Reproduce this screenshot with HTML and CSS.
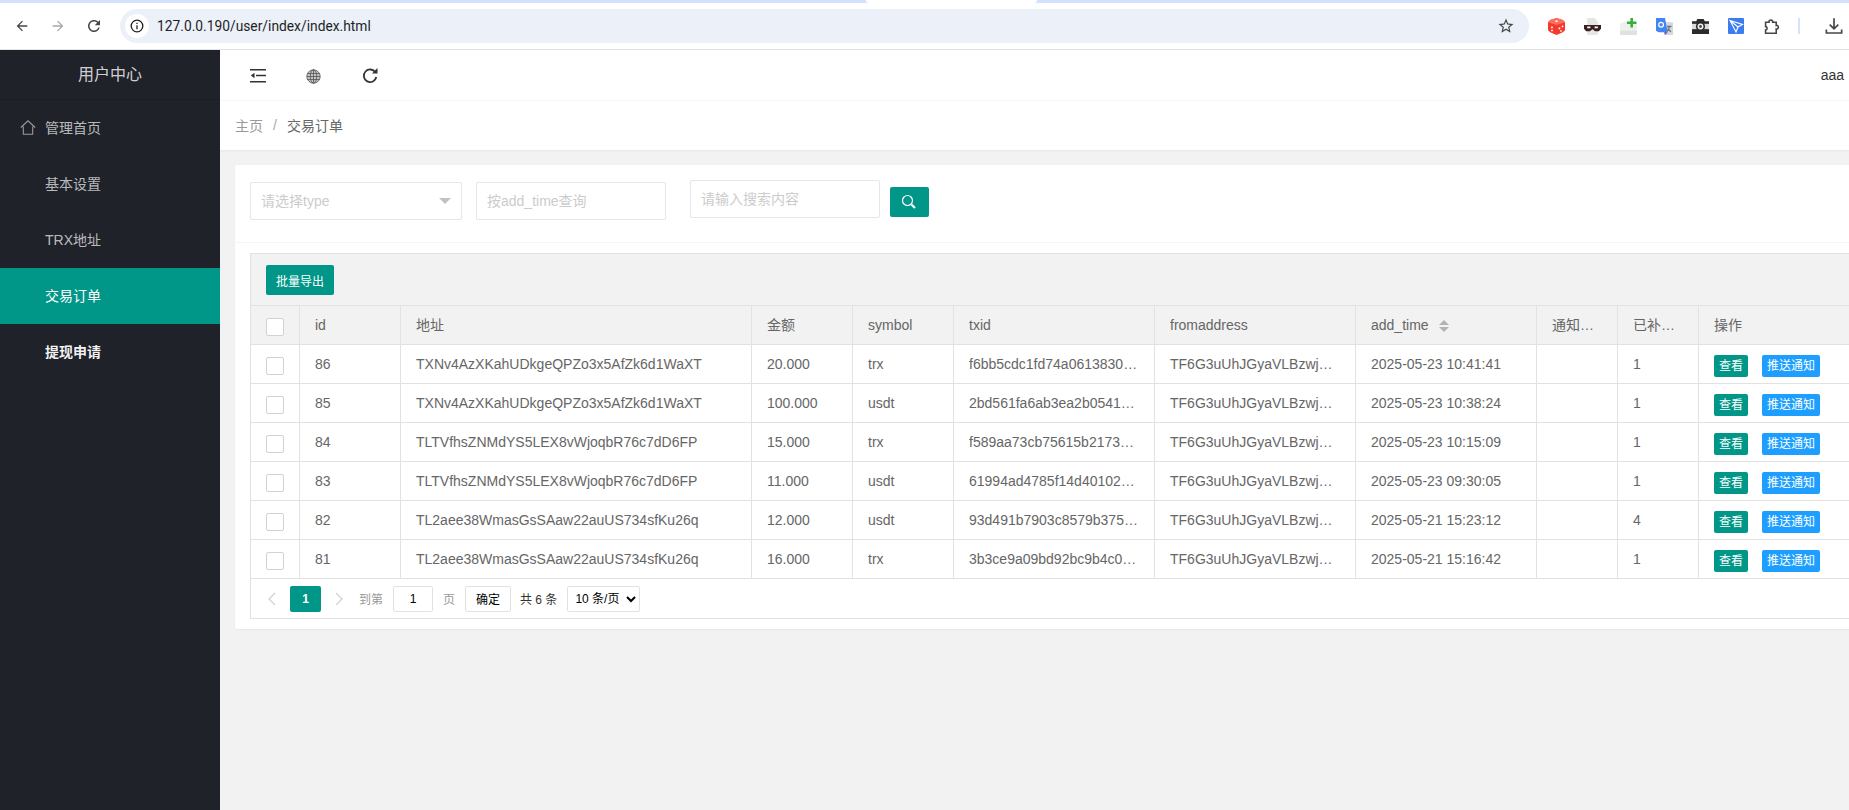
FILE: index.html
```html
<!DOCTYPE html>
<html lang="zh-CN">
<head>
    <meta charset="UTF-8">
    <title>交易订单</title>
    <link rel="stylesheet" href="styles.css">
</head>
<body>
    <div class="chrome">
        <div class="tabstrip"><div class="tabstrip-active"></div></div>
        <div class="toolbar">
            <span class="tool"><svg width="16" height="16" viewBox="0 0 24 24" fill="#474747"><path d="M20 11H7.830l5.590-5.590L12 4l-8 8 8 8 1.410-1.410L7.830 13H20v-2z"/></svg></span>
            <span class="tool"><svg width="16" height="16" viewBox="0 0 24 24" fill="#a8a8a8"><path d="M4 11h12.170l-5.590-5.590L12 4l8 8-8 8-1.410-1.410L16.170 13H4v-2z"/></svg></span>
            <span class="tool"><svg width="18" height="18" viewBox="0 0 24 24" fill="#474747"><path d="M17.650 6.350C16.200 4.900 14.210 4 12 4c-4.420 0-7.990 3.580-7.990 8s3.570 8 7.990 8c3.730 0 6.840-2.550 7.730-6h-2.080c-.82 2.330-3.040 4-5.650 4-3.310 0-6-2.690-6-6s2.690-6 6-6c1.660 0 3.140.69 4.220 1.780L13 11h7V4l-2.350 2.350z"/></svg></span>
            <div class="omnibox">
                <span class="site-info"><svg width="14" height="14" viewBox="0 0 14 14" fill="none" stroke="#1f1f1f" stroke-width="1.300"><circle cx="7" cy="7" r="5.800"/><path d="M7 6.200v4M7 3.700v1.300"/></svg></span>
                <span class="url">127.0.0.190/user/index/index.html</span>
                <svg class="star" width="18" height="18" viewBox="0 0 24 24" fill="#474747"><path d="M22 9.240l-7.190-.62L12 2 9.190 8.630 2 9.240l5.460 4.730L5.820 21 12 17.270 18.180 21l-1.630-7.030L22 9.240zM12 15.400l-3.760 2.270 1-4.280-3.320-2.880 4.380-.38L12 6.100l1.710 4.040 4.380.38-3.320 2.880 1 4.280L12 15.400z"/></svg>
            </div>
            <div class="extensions">
                <span class="tool"><svg width="17" height="17" viewBox="0 0 16 16"><path fill="#f4392d" d="M8 0l6 1.800 2 2.200v7.500l-2 2L8 16l-6-2.500-2-2V4l2-2.200z"/><path fill="#fb6f61" d="M8 0l6 1.800 2 2.200-8 2.500L0 4l2-2.200z"/><path fill="#fff" d="M7 2.400h2v1.300H7zM3 8h1.500v1.700H3zM3 11h1.500v1.500H3zM10 9h1.500v1.700H10zM13 7h1.300v1.600H13zM11.500 11.500h1.400v1.400h-1.400z"/></svg></span>
                <span class="tool"><svg width="17" height="17" viewBox="0 0 16 16"><path fill="#e6e6e6" d="M3 0h7l3 3.500V16H3z"/><path fill="#3c1f1f" d="M0 6.500h16v3.500l-2 2.500h-3.500L8 10.500 5.500 12.500H2L0 10z"/><path fill="#fff" d="M3 8h3v1.600H3zM10 8h3v1.600h-3z"/></svg></span>
                <span class="tool"><svg width="17" height="17" viewBox="0 0 16 16"><path fill="#eef0ee" d="M0 5l6-2v2h10v11H0z"/><path fill="#dfe2df" d="M0 12h16v4H0z"/><path fill="#38ad38" d="M9.800 0h2.400v3.300h3.300v2.400h-3.300V9H9.800V5.700H6.500V3.300h3.300z"/></svg></span>
                <span class="tool"><svg width="17" height="17" viewBox="0 0 16 16"><path fill="#d5d7da" d="M7 4h9v12H9z"/><path fill="#4285f4" d="M0 0h8.500l2.500 13.500H2.500L0 12z"/><path fill="#5a4ec0" d="M7.500 13.500h3.500L8.500 16z"/><circle cx="4.800" cy="6.300" r="2.200" fill="none" stroke="#fff" stroke-width="1.200"/><path fill="none" stroke="#6b7177" stroke-width="1.200" d="M10.500 8h4M12.500 8c0 2-1 3.500-2 4.500M11 10l3 3"/></svg></span>
                <span class="tool"><svg width="17" height="15" viewBox="0 0 16 14"><path fill="#2b2b2b" d="M0 2h4l1-2h6l1 2h4v12H0z"/><path fill="#dcdcdc" d="M0 4.500h16v5H0z"/><circle cx="8" cy="7" r="4.300" fill="#2b2b2b"/><circle cx="8" cy="7" r="2.800" fill="#f0f0f0"/><circle cx="8" cy="7" r="1.300" fill="#444"/></svg></span>
                <span class="tool"><svg width="16" height="16" viewBox="0 0 16 16"><rect width="16" height="16" rx="1" fill="#3d7cf0"/><path fill="none" stroke="#fff" stroke-width="1.100" d="M2 2.500l12.500 4-4.500 2.500-2 5zM2 2.500L10 9"/></svg></span>
                <span class="tool"><svg width="17" height="17" viewBox="0 0 16 16" fill="none" stroke="#474747" stroke-width="1.500"><path d="M1.500 4h3.200c-.6-2.800 4.100-2.800 3.500 0h3.300v3c2.600-.6 2.600 3.900 0 3.300v4H1.500v-3c1.800.3 1.800-3.500 0-3.200z"/></svg></span>
            </div>
            <span class="toolbar-sep"></span>
            <span class="tool tool-download"><svg width="18" height="18" viewBox="0 0 16 16" fill="none" stroke="#474747" stroke-width="1.500"><path d="M8 1v9M4.200 6.800L8 10.500l3.800-3.700M1.200 11v3.200h13.600V11"/></svg></span>
        </div>
    </div>

    <div class="app">
        <aside class="sidebar">
            <div class="logo">用户中心</div>
            <ul class="nav">
                <li class="nav-item">
                    <svg class="nav-icon" width="16" height="15" viewBox="0 0 16 15" fill="none" stroke="#9a9a9a" stroke-width="1.100"><path d="M.8 7.500L8 .8l7.200 6.700M3.300 6.500v7.800h9.400V6.500"/></svg>
                    管理首页
                </li>
                <li class="nav-item">基本设置</li>
                <li class="nav-item">TRX地址</li>
                <li class="nav-item active">交易订单</li>
                <li class="nav-item strong">提现申请</li>
            </ul>
        </aside>

        <main class="main">
            <header class="topbar">
                <span class="top-icon"><svg width="16" height="14" viewBox="0 0 16 14" fill="#333"><path d="M0 0h16v1.500H0zM6 5.800h10v1.500H6zM0 12h16v1.500H0zM4.500 3.800v5.500L.8 6.500z"/></svg></span>
                <span class="top-icon"><svg width="15" height="15" viewBox="0 0 15 15" fill="none" stroke="#555" stroke-width=".8"><circle cx="7.500" cy="7.500" r="6.700" fill="#c4c4c4"/><ellipse cx="7.500" cy="7.500" rx="3.200" ry="6.700"/><path d="M7.500 .8v13.400M1.300 4.500h12.400M.8 7.500h13.400M1.300 10.500h12.400"/></svg></span>
                <span class="top-icon"><svg width="16" height="16" viewBox="0 0 16 16" fill="none" stroke="#333" stroke-width="1.800"><path d="M13.500 4.500A6.300 6.300 0 1 0 14.300 9"/><path fill="#333" stroke="none" d="M10 5.500h5.500V0z"/></svg></span>
                <span class="top-user">aaa</span>
            </header>
            <div class="breadcrumb">
                <span class="crumb-home">主页</span>
                <span class="crumb-sep">/</span>
                <span class="crumb-current">交易订单</span>
            </div>

            <div class="content">
                <section class="card">
                    <form class="filters">
                        <div class="fake-select">
                            <span>请选择type</span>
                            <i class="caret"></i>
                        </div>
                        <input class="field field-time" placeholder="按add_time查询">
                        <input class="field field-search" placeholder="请输入搜索内容">
                        <button class="search-btn" type="button">
                            <svg width="16" height="16" viewBox="0 0 16 16" fill="none" stroke="#fff" stroke-width="1.200"><circle cx="6.500" cy="6.500" r="5"/><path stroke-width="2.200" d="M10.500 10.500l3.500 3.500"/></svg>
                        </button>
                    </form>

                    <div class="table-box">
                        <div class="table-tools">
                            <button class="btn" type="button">批量导出</button>
                        </div>
                        <table class="table">
                            <colgroup>
                                <col class="c-check"><col class="c-id"><col class="c-addr"><col class="c-amount"><col class="c-symbol"><col class="c-txid"><col class="c-from"><col class="c-time"><col class="c-short"><col class="c-short"><col class="c-ops">
                            </colgroup>
                            <thead>
                                <tr>
                                    <th><i class="check"></i></th>
                                    <th><div class="cell">id</div></th>
                                    <th><div class="cell">地址</div></th>
                                    <th><div class="cell">金额</div></th>
                                    <th><div class="cell">symbol</div></th>
                                    <th><div class="cell">txid</div></th>
                                    <th><div class="cell">fromaddress</div></th>
                                    <th><div class="cell">add_time<span class="sort"><i class="sort-up"></i><i class="sort-down"></i></span></div></th>
                                    <th><div class="cell">通知…</div></th>
                                    <th><div class="cell">已补…</div></th>
                                    <th class="no-border"><div class="cell">操作</div></th>
                                </tr>
                            </thead>
                            <tbody>
                                <tr>
                                    <td><i class="check"></i></td>
                                    <td><div class="cell">86</div></td>
                                    <td><div class="cell">TXNv4AzXKahUDkgeQPZo3x5AfZk6d1WaXT</div></td>
                                    <td><div class="cell">20.000</div></td>
                                    <td><div class="cell">trx</div></td>
                                    <td><div class="cell">f6bb5cdc1fd74a0613830…</div></td>
                                    <td><div class="cell">TF6G3uUhJGyaVLBzwj…</div></td>
                                    <td><div class="cell">2025-05-23 10:41:41</div></td>
                                    <td><div class="cell"></div></td>
                                    <td><div class="cell">1</div></td>
                                    <td class="no-border"><div class="cell ops"><a class="op op-view">查看</a><a class="op op-push">推送通知</a></div></td>
                                </tr>
                                <tr>
                                    <td><i class="check"></i></td>
                                    <td><div class="cell">85</div></td>
                                    <td><div class="cell">TXNv4AzXKahUDkgeQPZo3x5AfZk6d1WaXT</div></td>
                                    <td><div class="cell">100.000</div></td>
                                    <td><div class="cell">usdt</div></td>
                                    <td><div class="cell">2bd561fa6ab3ea2b0541…</div></td>
                                    <td><div class="cell">TF6G3uUhJGyaVLBzwj…</div></td>
                                    <td><div class="cell">2025-05-23 10:38:24</div></td>
                                    <td><div class="cell"></div></td>
                                    <td><div class="cell">1</div></td>
                                    <td class="no-border"><div class="cell ops"><a class="op op-view">查看</a><a class="op op-push">推送通知</a></div></td>
                                </tr>
                                <tr>
                                    <td><i class="check"></i></td>
                                    <td><div class="cell">84</div></td>
                                    <td><div class="cell">TLTVfhsZNMdYS5LEX8vWjoqbR76c7dD6FP</div></td>
                                    <td><div class="cell">15.000</div></td>
                                    <td><div class="cell">trx</div></td>
                                    <td><div class="cell">f589aa73cb75615b2173…</div></td>
                                    <td><div class="cell">TF6G3uUhJGyaVLBzwj…</div></td>
                                    <td><div class="cell">2025-05-23 10:15:09</div></td>
                                    <td><div class="cell"></div></td>
                                    <td><div class="cell">1</div></td>
                                    <td class="no-border"><div class="cell ops"><a class="op op-view">查看</a><a class="op op-push">推送通知</a></div></td>
                                </tr>
                                <tr>
                                    <td><i class="check"></i></td>
                                    <td><div class="cell">83</div></td>
                                    <td><div class="cell">TLTVfhsZNMdYS5LEX8vWjoqbR76c7dD6FP</div></td>
                                    <td><div class="cell">11.000</div></td>
                                    <td><div class="cell">usdt</div></td>
                                    <td><div class="cell">61994ad4785f14d40102…</div></td>
                                    <td><div class="cell">TF6G3uUhJGyaVLBzwj…</div></td>
                                    <td><div class="cell">2025-05-23 09:30:05</div></td>
                                    <td><div class="cell"></div></td>
                                    <td><div class="cell">1</div></td>
                                    <td class="no-border"><div class="cell ops"><a class="op op-view">查看</a><a class="op op-push">推送通知</a></div></td>
                                </tr>
                                <tr>
                                    <td><i class="check"></i></td>
                                    <td><div class="cell">82</div></td>
                                    <td><div class="cell">TL2aee38WmasGsSAaw22auUS734sfKu26q</div></td>
                                    <td><div class="cell">12.000</div></td>
                                    <td><div class="cell">usdt</div></td>
                                    <td><div class="cell">93d491b7903c8579b375…</div></td>
                                    <td><div class="cell">TF6G3uUhJGyaVLBzwj…</div></td>
                                    <td><div class="cell">2025-05-21 15:23:12</div></td>
                                    <td><div class="cell"></div></td>
                                    <td><div class="cell">4</div></td>
                                    <td class="no-border"><div class="cell ops"><a class="op op-view">查看</a><a class="op op-push">推送通知</a></div></td>
                                </tr>
                                <tr>
                                    <td><i class="check"></i></td>
                                    <td><div class="cell">81</div></td>
                                    <td><div class="cell">TL2aee38WmasGsSAaw22auUS734sfKu26q</div></td>
                                    <td><div class="cell">16.000</div></td>
                                    <td><div class="cell">trx</div></td>
                                    <td><div class="cell">3b3ce9a09bd92bc9b4c0…</div></td>
                                    <td><div class="cell">TF6G3uUhJGyaVLBzwj…</div></td>
                                    <td><div class="cell">2025-05-21 15:16:42</div></td>
                                    <td><div class="cell"></div></td>
                                    <td><div class="cell">1</div></td>
                                    <td class="no-border"><div class="cell ops"><a class="op op-view">查看</a><a class="op op-push">推送通知</a></div></td>
                                </tr>
                            </tbody>
                        </table>
                        <div class="pager">
                            <svg class="pager-arrow" width="9" height="14" viewBox="0 0 9 14" fill="none" stroke="#d2d2d2" stroke-width="1.300"><path d="M8 1L2 7l6 6"/></svg>
                            <span class="page-current">1</span>
                            <svg class="pager-arrow pager-next" width="9" height="14" viewBox="0 0 9 14" fill="none" stroke="#d2d2d2" stroke-width="1.300"><path d="M1 1l6 6-6 6"/></svg>
                            <span class="pager-label">到第</span>
                            <input class="page-input" value="1">
                            <span class="pager-label">页</span>
                            <button class="page-ok" type="button">确定</button>
                            <span class="page-total">共 6 条</span>
                            <select class="page-size"><option>10 条/页</option><option>20 条/页</option></select>
                        </div>
                    </div>
                </section>
            </div>
        </main>
    </div>
</body>
</html>
```

FILE: styles.css
```css
* {
    box-sizing: border-box;
}
html, body {
    height: 100%;
}
body {
    margin: 0;
    overflow: hidden;
    display: flex;
    flex-direction: column;
    font-family: "Liberation Sans", "Noto Sans CJK SC", sans-serif;
    font-size: 14px;
    color: #666;
    background: #f2f2f2;
}

/* browser bar */
.chrome {
    flex: none;
    height: 50px;
    background: #fff;
    border-bottom: 1px solid #e1e3e6;
}
.tabstrip {
    height: 3px;
    padding-left: 866px;
    background: #d3e3fd;
}
.tabstrip-active {
    width: 171px;
    height: 3px;
    background: #fff;
    border-radius: 0 0 4px 4px;
}
.toolbar {
    display: flex;
    align-items: flex-start;
    height: 46px;
    padding: 6px 0 0 4px;
}
.tool {
    width: 36px;
    height: 34px;
    flex: none;
    display: flex;
    align-items: center;
    justify-content: center;
}
.omnibox {
    flex: none;
    width: 1409px;
    height: 34px;
    margin-left: 8px;
    padding: 0 14px 0 5px;
    display: flex;
    align-items: center;
    background: #ebf0f9;
    border-radius: 17px;
}
.site-info {
    width: 24px;
    height: 24px;
    border-radius: 50%;
    background: #fff;
    display: flex;
    align-items: center;
    justify-content: center;
}
.url {
    margin-left: 8px;
    font-family: Roboto, sans-serif;
    font-size: 13.8px;
    color: #1f1f1f;
}
.star {
    margin-left: auto;
}
.extensions {
    display: flex;
    margin-left: 9px;
}
.toolbar-sep {
    flex: none;
    width: 2px;
    height: 16px;
    margin: 9px 0 0 8px;
    background: #d3e3fd;
}
.tool-download {
    width: 30px;
    margin-left: 19px;
}

/* page */
.app {
    flex: 1;
    display: flex;
    min-height: 0;
}
.sidebar {
    flex: none;
    width: 220px;
    background: #20222a;
}
.logo {
    height: 50px;
    line-height: 49px;
    text-align: center;
    font-size: 16px;
    color: rgba(255, 255, 255, 0.8);
    border-bottom: 1px solid #1c1e25;
}
.nav {
    list-style: none;
    margin: 0;
    padding: 0;
}
.nav-item {
    display: flex;
    align-items: center;
    height: 56px;
    padding: 0 0 2px 45px;
    color: rgba(255, 255, 255, 0.7);
}
.nav-item.active {
    background: #009688;
    color: #fff;
}
.nav-item.strong {
    color: rgba(255, 255, 255, 0.95);
    font-weight: bold;
}
.nav-icon {
    margin-left: -25px;
    margin-right: 9px;
}
.main {
    flex: 1;
    min-width: 0;
    display: flex;
    flex-direction: column;
    overflow: hidden;
}
.topbar {
    flex: none;
    display: flex;
    align-items: center;
    height: 51px;
    padding: 2px 5px 0 30px;
    background: #fff;
    border-bottom: 1px solid #f6f6f6;
}
.top-icon {
    width: 56px;
    display: flex;
}
.top-user {
    margin: -2px 0 0 auto;
    color: #333;
}
.breadcrumb {
    flex: none;
    height: 49px;
    padding: 0 0 2px 15px;
    display: flex;
    align-items: center;
    background: #fff;
    box-shadow: 0 1px 2px rgba(0, 0, 0, 0.05);
}
.crumb-home {
    color: #999;
}
.crumb-sep {
    margin: 0 10px;
    color: #aaa;
}
.crumb-current {
    color: #666;
}
.content {
    flex: 1;
    padding: 15px 0 0 15px;
}
.card {
    width: 1700px;
    padding: 0 15px 10px;
    background: #fff;
    border-radius: 2px;
    box-shadow: 0 1px 2px rgba(0, 0, 0, 0.05);
}

/* filters */
.filters {
    display: flex;
    align-items: flex-start;
    height: 78px;
    margin: 0 -15px;
    padding: 17px 15px 0;
    border-bottom: 1px solid #f6f6f6;
}
.fake-select, .field {
    height: 38px;
    border: 1px solid #e6e6e6;
    border-radius: 2px;
    background: #fff;
    font: inherit;
    padding: 0 10px;
    outline: none;
}
.field::placeholder, .fake-select span {
    color: #ccc;
}
.fake-select {
    width: 212px;
    display: flex;
    align-items: center;
    justify-content: space-between;
}
.fake-select span {
    margin-top: -2px;
}
.caret {
    width: 0;
    height: 0;
    border: 6px solid transparent;
    border-top-color: #c2c2c2;
    border-bottom-width: 0;
}
.field-time {
    width: 190px;
    margin-left: 14px;
}
.field-search {
    width: 190px;
    margin: -2px 0 0 24px;
}
.search-btn {
    width: 39px;
    height: 30px;
    margin: 5px 0 0 10px;
    padding: 0 2px 0 0;
    border: none;
    border-radius: 2px;
    background: #009688;
    display: flex;
    align-items: center;
    justify-content: center;
}

/* table */
.table-box {
    margin-top: 10px;
    border: 1px solid #e2e2e2;
    border-right: none;
}
.table-tools {
    height: 52px;
    padding: 11px 15px 0;
    background: #f2f2f2;
    border-bottom: 1px solid #e2e2e2;
}
.btn {
    width: 68px;
    height: 30px;
    padding: 0;
    border: none;
    border-radius: 2px;
    background: #009688;
    color: #fff;
    font: inherit;
    font-size: 12px;
}
.table {
    table-layout: fixed;
    width: 1628px;
    border-collapse: separate;
    border-spacing: 0;
}
.c-check { width: 49px; }
.c-id { width: 101px; }
.c-addr { width: 351px; }
.c-amount { width: 101px; }
.c-symbol { width: 101px; }
.c-txid { width: 201px; }
.c-from { width: 201px; }
.c-time { width: 181px; }
.c-short { width: 81px; }
.c-ops { width: 180px; }
.table th, .table td {
    height: 39px;
    padding: 0;
    border-right: 1px solid #e2e2e2;
    border-bottom: 1px solid #e2e2e2;
    font-weight: normal;
    text-align: left;
}
.table th {
    background: #f2f2f2;
}
.table .no-border {
    border-right: none;
}
.cell {
    padding: 0 15px;
    line-height: 28px;
    white-space: nowrap;
}
.check {
    display: block;
    width: 18px;
    height: 18px;
    margin: 3px 0 0 15px;
    background: #fff;
    border: 1px solid #d2d2d2;
    border-radius: 2px;
}
.sort {
    display: inline-flex;
    flex-direction: column;
    gap: 2px;
    margin: 9px 0 0 10px;
    vertical-align: top;
}
.sort-up, .sort-down {
    width: 0;
    height: 0;
    border: 5.5px solid transparent;
    border-top-width: 0;
    border-bottom-color: #b2b2b2;
}
.sort-down {
    border-bottom-width: 0;
    border-top-width: 5.5px;
    border-top-color: #b2b2b2;
}
.ops {
    display: flex;
    gap: 14px;
    margin-top: 3px;
}
.op {
    height: 22px;
    line-height: 22px;
    padding: 0 5px;
    border-radius: 2px;
    color: #fff;
    font-size: 12px;
}
.op-view {
    background: #009688;
}
.op-push {
    background: #1e9fff;
}

/* pager */
.pager {
    display: flex;
    align-items: center;
    height: 39px;
    padding: 0 0 0 16px;
    font-size: 12px;
    color: #999;
}
.pager-arrow {
    flex: none;
}
.page-current {
    width: 31px;
    height: 26px;
    line-height: 26px;
    margin: 0 14px;
    text-align: center;
    color: #fff;
    font-weight: bold;
    background: #009688;
    border-radius: 2px;
}
.pager-next {
    margin-right: 15px;
}
.page-input {
    width: 40px;
    height: 26px;
    margin: 0 10px;
    padding: 0;
    border: 1px solid #e2e2e2;
    border-radius: 2px;
    text-align: center;
    font: inherit;
    color: #000;
}
.page-ok {
    width: 46px;
    height: 26px;
    margin-left: 10px;
    padding: 0;
    background: #fff;
    border: 1px solid #e2e2e2;
    border-radius: 2px;
    font: inherit;
    color: #000;
}
.page-total {
    margin: 0 10px 0 9px;
    color: #333;
}
.page-size {
    width: 73px;
    height: 26px;
    padding: 0 3px;
    background: #fff;
    border: 1px solid #e2e2e2;
    border-radius: 2px;
    font: inherit;
    color: #000;
}
```
